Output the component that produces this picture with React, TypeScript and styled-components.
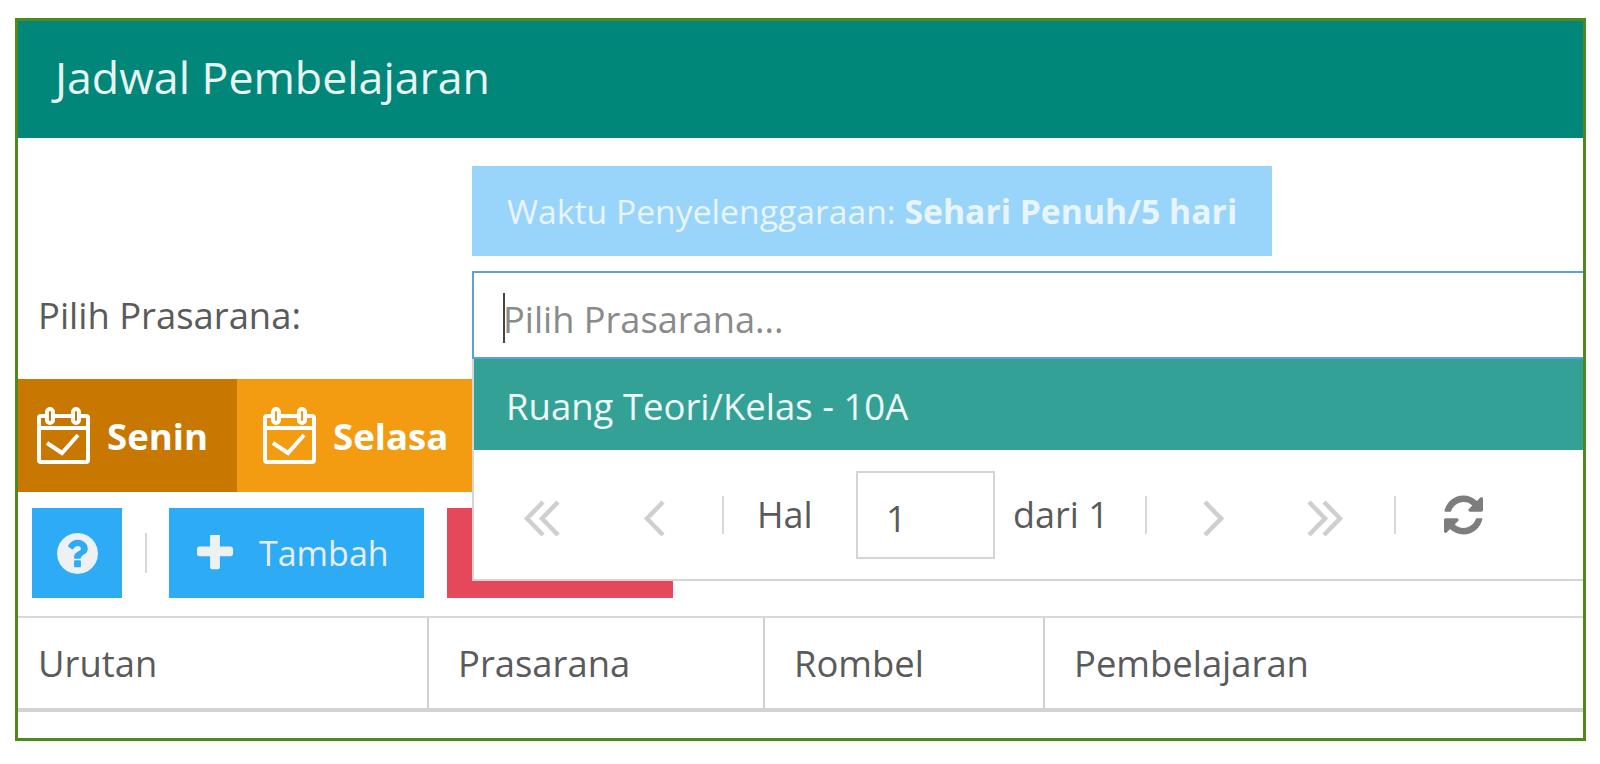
import * as React from "react";
import styled, { createGlobalStyle } from "styled-components";

const GlobalStyle = createGlobalStyle`
  html, body {
    margin: 0;
    padding: 0;
    background: #fff;
  }
  * {
    box-sizing: border-box;
  }
`;

const Page = styled.div`
  width: 1600px;
  height: 764px;
  padding: 18px 0 0 15px;
  font-family: "Open Sans", "Liberation Sans", sans-serif;
  color: #5a5a5a;
`;

const Frame = styled.div`
  width: 1571px;
  height: 723px;
  border: 3px solid #4f8a18;
  overflow: hidden;
`;

const Header = styled.header`
  height: 117px;
  background: #00877a;
  color: #e8f4f1;
  font-size: 44.7px;
  padding: 0 0 6px 37px;
  display: flex;
  align-items: center;
`;

const FormArea = styled.div`
  display: grid;
  grid-template-columns: 454px 1fr;
  padding: 28px 0 20px;
`;

const Notice = styled.div`
  grid-column: 2;
  width: 800px;
  height: 90px;
  background: #99d4fb;
  color: #e9f5fd;
  font-size: 33.7px;
  padding-left: 35px;
  display: flex;
  align-items: center;
  white-space: pre;
  b {
    font-weight: 700;
  }
`;

const FieldLabel = styled.label`
  grid-column: 1;
  align-self: end;
  height: 88px;
  font-size: 36.4px;
  padding-left: 20px;
  display: flex;
  align-items: center;
`;

const Picker = styled.div`
  grid-column: 2;
  margin-top: 15px;
  position: relative;
  height: 88px;
`;

const Input = styled.div`
  height: 88px;
  border: 2px solid #5a9fdf;
  border-right: none;
  background: #fff;
  font-size: 36.2px;
  color: #8a8a8a;
  padding: 8px 0 0 29px;
  display: flex;
  align-items: center;
  position: relative;
`;

const Caret = styled.span`
  position: absolute;
  left: 29px;
  top: 20px;
  width: 2px;
  height: 50px;
  background: #444;
`;

const Dropdown = styled.div`
  position: absolute;
  top: 88px;
  left: 0;
  right: 0;
  height: 222px;
  background: #fff;
  border-left: 2px solid #d5d5d5;
  border-bottom: 2px solid #d5d5d5;
`;

const Option = styled.div`
  height: 91px;
  background: #34a197;
  color: #eef8f5;
  font-size: 36.5px;
  padding: 2px 0 0 32px;
  display: flex;
  align-items: center;
`;

const Pager = styled.div`
  display: flex;
  align-items: center;
  height: 129px;
  font-size: 36px;
`;

const PagerIcon = styled.span<{ $l: number; $t?: number }>`
  margin-left: ${(p) => p.$l}px;
  margin-top: ${(p) => p.$t || 0}px;
  display: flex;
  flex: none;
`;

const PagerRule = styled.span<{ $l: number }>`
  margin-left: ${(p) => p.$l}px;
  width: 2px;
  height: 38px;
  background: #d8d8d8;
  flex: none;
`;

const PagerText = styled.span<{ $l: number; $w: number }>`
  margin-left: ${(p) => p.$l}px;
  width: ${(p) => p.$w}px;
  flex: none;
`;

const PageBox = styled.span`
  width: 139px;
  height: 88px;
  border: 2px solid #d5d5d5;
  padding: 8px 0 0 28px;
  display: flex;
  align-items: center;
  flex: none;
`;

const DayTabs = styled.div`
  display: flex;
  height: 113px;
`;

const DayTab = styled.div<{ $active?: boolean }>`
  width: ${(p) => (p.$active ? 219 : 237)}px;
  padding-left: ${(p) => (p.$active ? 19 : 26)}px;
  background: ${(p) => (p.$active ? "#c87700" : "#f39c12")};
  color: #fff;
  font-size: 36.6px;
  font-weight: 700;
  display: flex;
  align-items: center;
  gap: 17px;
`;

const Toolbar = styled.div`
  display: flex;
  height: 124px;
  padding: 16px 0 0 14px;
`;

const ToolButton = styled.div<{ $w: number; $bg: string; $l?: number }>`
  width: ${(p) => p.$w}px;
  height: 90px;
  margin-left: ${(p) => p.$l || 0}px;
  background: ${(p) => p.$bg};
  display: flex;
  align-items: center;
  flex: none;
`;

const HelpButton = styled(ToolButton)`
  justify-content: center;
`;

const AddButton = styled(ToolButton)`
  color: #e6eef5;
  font-size: 34px;
  gap: 26px;
  padding-left: 28px;
`;

const ToolRule = styled.span`
  width: 2px;
  height: 40px;
  margin: 25px 22px 0 23px;
  background: #d8d8d8;
  flex: none;
`;

const Table = styled.div`
  display: flex;
  height: 96px;
  border-top: 2px solid #d8d8d8;
  border-bottom: 4px solid #d2d2d2;
`;

const HeadCell = styled.div<{ $w?: number; $pad: number }>`
  width: ${(p) => (p.$w ? `${p.$w}px` : "auto")};
  flex: ${(p) => (p.$w ? "none" : 1)};
  border-right: ${(p) => (p.$w ? "2px solid #d2d2d2" : "none")};
  font-size: 36.4px;
  padding-left: ${(p) => p.$pad}px;
  display: flex;
  align-items: center;
`;

const CalendarIcon = () => (
  <svg width="53" height="57" viewBox="0 0 53 57" fill="none" stroke="#fff" strokeWidth="4" style={{ flex: "none" }}>
    <path d="M9 9H4a2 2 0 0 0-2 2v42a2 2 0 0 0 2 2h45a2 2 0 0 0 2-2V11a2 2 0 0 0-2-2h-5" />
    <path d="M18 9h17" />
    <path d="M2 21h49" />
    <rect x="10" y="2" width="6" height="14" rx="3" />
    <rect x="36" y="2" width="6" height="14" rx="3" />
    <path d="M10 36l15 10 16-18" />
  </svg>
);

const HelpIcon = () => (
  <svg width="41" height="41" viewBox="128 128 1536 1536" fill="#edf1f4">
    <path d="M1024 1376v-192q0-14-9-23t-23-9h-192q-14 0-23 9t-9 23v192q0 14 9 23t23 9h192q14 0 23-9t9-23zm256-672q0-88-55.5-163t-138.5-116-170-41q-243 0-371 213-15 24 8 42l132 100q7 6 19 6 16 0 25-12 53-68 86-92 34-24 86-24 48 0 85.5 26t37.5 59q0 38-20 61t-68 45q-63 28-115.5 86.5t-52.5 125.5v36q0 14 9 23t23 9h192q14 0 23-9t9-23q0-19 21.5-49.5t54.5-49.5q32-18 49-28.5t46-35 44.5-48 28-60.5 12.5-81zm384 192q0 209-103 385.5t-279.5 279.5-385.5 103-385.5-103-279.5-279.5-103-385.5 103-385.5 279.5-279.5 385.5-103 385.5 103 279.5 279.5 103 385.5z" />
  </svg>
);

const PlusIcon = () => (
  <svg width="36" height="36" viewBox="192 192 1408 1408" fill="#edf1f4" style={{ flex: "none" }}>
    <path d="M1600 736v192q0 40-28 68t-68 28h-416v416q0 40-28 68t-68 28h-192q-40 0-68-28t-28-68v-416h-416q-40 0-68-28t-28-68v-192q0-40 28-68t68-28h416v-416q0-40 28-68t68-28h192q40 0 68 28t28 68v416h416q40 0 68 28t28 68z" />
  </svg>
);

const Chevron = ({ d, w }: { d: string; w: number }) => (
  <svg width={w} height="37" viewBox={`0 0 ${w} 37`} fill="none" stroke="#cfcfcf" strokeWidth="4.5">
    <path d={d} />
  </svg>
);

const RefreshIcon = () => (
  <svg width="39" height="40" viewBox="128 128 1536 1536" fill="#7d7d7d">
    <path d="M1639 1056q0 5-1 7-64 268-268 434.5t-478 166.5q-146 0-282.5-55t-243.5-157l-129 129q-19 19-45 19t-45-19-19-45v-448q0-26 19-45t45-19h448q26 0 45 19t19 45-19 45l-137 137q71 66 161 102t187 36q134 0 250-65t186-179q11-17 53-117 8-23 30-23h192q13 0 22.5 9.5t9.5 22.5zm25-800v448q0 26-19 45t-45 19h-448q-26 0-45-19t-19-45 19-45l138-138q-148-137-349-137-134 0-250 65t-186 179q-11 17-53 117-8 23-30 23h-199q-13 0-22.5-9.5t-9.5-22.5v-7q65-268 270-434.5t480-166.5q146 0 284 55.5t245 156.5l130-129q19-19 45-19t45 19 19 45z" />
  </svg>
);

function App() {
  return (
    <Page>
      <GlobalStyle />
      <Frame>
        <Header>Jadwal Pembelajaran</Header>
        <FormArea>
          <Notice>
            Waktu Penyelenggaraan: <b>Sehari Penuh/5 hari</b>
          </Notice>
          <FieldLabel>Pilih Prasarana:</FieldLabel>
          <Picker>
            <Input>
              <Caret />
              Pilih Prasarana...
            </Input>
            <Dropdown>
              <Option>Ruang Teori/Kelas - 10A</Option>
              <Pager>
                <PagerIcon $l={49} $t={8}>
                  <Chevron w={37} d="M20 2L4 18.5 20 35M35 2L19 18.5 35 35" />
                </PagerIcon>
                <PagerIcon $l={83} $t={8}>
                  <Chevron w={22} d="M20 2L4 18.5 20 35" />
                </PagerIcon>
                <PagerRule $l={57} />
                <PagerText $l={33} $w={99}>Hal</PagerText>
                <PageBox>1</PageBox>
                <PagerText $l={18} $w={132}>dari 1</PagerText>
                <PagerRule $l={0} />
                <PagerIcon $l={56} $t={8}>
                  <Chevron w={21} d="M2 2l16 16.5L2 35" />
                </PagerIcon>
                <PagerIcon $l={83} $t={8}>
                  <Chevron w={37} d="M2 2l16 16.5L2 35M17 2l16 16.5L17 35" />
                </PagerIcon>
                <PagerRule $l={50} />
                <PagerIcon $l={48}>
                  <RefreshIcon />
                </PagerIcon>
              </Pager>
            </Dropdown>
          </Picker>
        </FormArea>
        <DayTabs>
          <DayTab $active>
            <CalendarIcon />
            Senin
          </DayTab>
          <DayTab>
            <CalendarIcon />
            Selasa
          </DayTab>
        </DayTabs>
        <Toolbar>
          <HelpButton $w={90} $bg="#2eabf5">
            <HelpIcon />
          </HelpButton>
          <ToolRule />
          <AddButton $w={255} $bg="#2eabf5">
            <PlusIcon />
            Tambah
          </AddButton>
          <ToolButton $w={226} $bg="#e6485b" $l={23} />
        </Toolbar>
        <Table>
          <HeadCell $w={411} $pad={20}>Urutan</HeadCell>
          <HeadCell $w={336} $pad={29}>Prasarana</HeadCell>
          <HeadCell $w={280} $pad={29}>Rombel</HeadCell>
          <HeadCell $pad={29}>Pembelajaran</HeadCell>
        </Table>
      </Frame>
    </Page>
  );
}

export default App;
